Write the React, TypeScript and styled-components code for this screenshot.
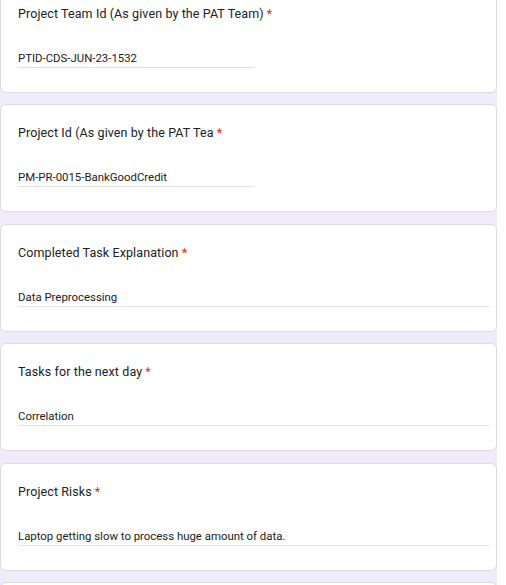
import React from "react";
import styled, { createGlobalStyle } from "styled-components";

const Global = createGlobalStyle`
  html, body { margin: 0; padding: 0; background: #ffffff; overflow: hidden; }
  body { font-family: Roboto, "Noto Sans", Arial, sans-serif; }
`;

const Page = styled.div`
  width: 497px;
  background: #f0ebf8;
  margin-top: -15px;
  display: flex;
  flex-direction: column;
  gap: 11.4px;
  padding-bottom: 40px;
`;

const Card = styled.div`
  box-sizing: border-box;
  height: 108px;
  background: #ffffff;
  border: 1px solid #dadce0;
  border-radius: 6px;
  padding: 19px 8px 0 17px;
`;

const Title = styled.div`
  font-size: 12.5px;
  line-height: 18px;
  color: #202124;
  letter-spacing: 0.1px;
`;

const Star = styled.span`
  color: #d93025;
  margin-left: 3px;
`;

const Field = styled.div<{ $wide: boolean }>`
  margin-top: 26px;
  width: ${(p) => (p.$wide ? "471px" : "236px")};
  border-bottom: 1px solid #e0e0e0;
  font-size: 11.4px;
  line-height: 18px;
  color: #202124;
`;

const items = [
  { q: "Project Team Id (As given by the PAT Team)", a: "PTID-CDS-JUN-23-1532", wide: false },
  { q: "Project Id (As given by the PAT Tea", a: "PM-PR-0015-BankGoodCredit", wide: false },
  { q: "Completed Task Explanation", a: "Data Preprocessing", wide: true },
  { q: "Tasks for the next day", a: "Correlation", wide: true },
  { q: "Project Risks", a: "Laptop getting slow to process huge amount of data.", wide: true },
  { q: "", a: "", wide: true },
];

export default function App() {
  return (
    <>
      <Global />
      <Page>
        {items.map((it, i) => (
          <Card key={i}>
            {it.q && (
              <>
                <Title>
                  {it.q}
                  <Star>*</Star>
                </Title>
                <Field $wide={it.wide}>{it.a}</Field>
              </>
            )}
          </Card>
        ))}
      </Page>
    </>
  );
}
